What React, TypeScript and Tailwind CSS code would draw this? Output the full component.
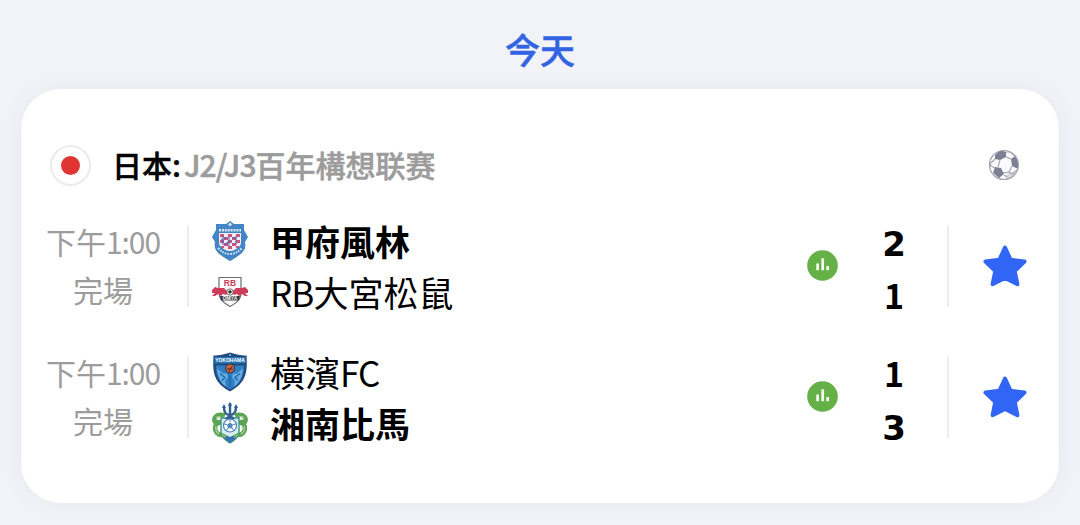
import { Fragment, type ReactNode } from "react";
import clsx from "clsx";

function KofuCrest() {
  return (
    <svg width="38" height="42" viewBox="0 0 38 42">
      <path
        d="M19 1l4 3 10 0 0 6 4 7-3 5c2 9-5 13-15 19C9 35 2 31 4 22l-3-5 4-7 0-6 10 0z"
        fill="#4385c5"
      />
      <path d="M8 13h22v9c0 6-5 9-11 13-6-4-11-7-11-13z" fill="#f3ecf5" />
      <path
        d="M9 14h4v3H9zM17 14h4v3h-4zM25 14h4v3h-4zM13 17h4v3h-4zM21 17h4v3h-4zM9 20h4v3H9zM17 20h4v3h-4zM25 20h4v3h-4zM13 23h4v3h-4zM21 23h4v3h-4zM17 26h4v3h-4zM10 26h3v2h-3zM25 26h3v2h-3z"
        fill="#c9567f"
      />
      <path
        d="M12 16v9M10 20l5-2M18 16v10M21 18h4M25 16v9M14 25l4-4"
        stroke="#5964aa"
        strokeWidth="1.1"
        fill="none"
      />
      <path d="M4 23c6 2 8 8 15 8s9-6 15-8l0 5c-4 6-9 9-15 13C13 36 8 33 4 27z" fill="#4385c5" />
      <path d="M7 28c4 4 7 6 12 6s8-2 12-6" stroke="#d9e9f6" strokeWidth="1.8" strokeDasharray="1.7 1.1" fill="none" />
      <path d="M17 4.5l2-2 2 2-2 2z" fill="#d3e5f4" />
      <path d="M8 10.3h22" stroke="#dcebf7" strokeWidth="2.6" strokeDasharray="2 .9" />
    </svg>
  );
}

function OmiyaCrest() {
  return (
    <svg width="38" height="32" viewBox="0 0 38 32">
      <path
        d="M8 1.5h22v15c0 7-4 10-11 14C12 26.5 8 23 8 16z"
        fill="#fff"
        stroke="#6b6b70"
        strokeWidth="1.2"
      />
      <path
        d="M1 14l3-3 3 1 6 0 4 4-2 3-3-1-2 2-3-2-3 2H1l3-3-3 0zM37 14l-3-3-3 1-6 0-4 4 2 3 3-1 2 2 3-2 3 2h3l-3-3 3 0z"
        fill="#cf3c5a"
      />
      <circle cx="19" cy="16" r="3.2" fill="#fff" stroke="#444" strokeWidth=".8" />
      <path d="M19 14l2 1.5-1 2h-2l-1-2z" fill="#333" />
      <path d="M9 20h20l-1 4.5H10z" fill="#3c3c42" />
      <text x="19" y="9.5" textAnchor="middle" fontSize="8.5" fontWeight="700" fontFamily="Liberation Sans, sans-serif" fill="#c93f5a">
        RB
      </text>
      <text x="19" y="23.8" textAnchor="middle" fontSize="4.5" fontWeight="700" fontFamily="Liberation Sans, sans-serif" fill="#fff">
        OMIYA
      </text>
    </svg>
  );
}

function YokohamaCrest() {
  return (
    <svg width="36" height="42" viewBox="0 0 36 41">
      <path
        d="M1.5 4c7 0 10-1 16.5-3 6.5 2 9.5 3 16.5 3 1 17 0 27-16.5 36C1.5 31 .5 21 1.5 4z"
        fill="#234a7c"
      />
      <path d="M4 14h28c0 12-4 18-14 24C8 32 4 26 4 14z" fill="#2f7fc4" />
      <path
        d="M5 17l6 5 4 0 1 4-3 3 1 6c-6-4-8-10-9-18zM31 17l-6 5-4 0-1 4 3 3-1 6c6-4 8-10 9-18z"
        fill="#65aee2"
      />
      <path d="M8 22l5 4-3 3M28 22l-5 4 3 3M18 24v12" stroke="#1e5fa4" strokeWidth="1.2" fill="none" />
      <circle cx="18" cy="17" r="5" fill="#23374f" />
      <circle cx="18" cy="17" r="4" fill="#c9623f" />
      <path d="M15 17l3 1 2-3M17 20l1-3 3 1" stroke="#572d2d" strokeWidth="1" fill="none" />
      <path d="M17 2.5h2v2h-2z" fill="#62a4d5" />
      <path d="M2.5 5.5h31v6.5h-31z" fill="#2773b7" />
      <text
        x="18"
        y="10.7"
        textAnchor="middle"
        fontSize="5"
        fontWeight="700"
        fontFamily="Liberation Sans, sans-serif"
        fill="#fff"
      >
        YOKOHAMA
      </text>
    </svg>
  );
}

function ShonanCrest() {
  return (
    <svg width="36" height="42" viewBox="0 0 36 42">
      <path
        d="M11 13C4 12 1 16 3 20c1 2 4 2 4 0M6 20c-5 5-3 12 3 13M25 13c7-1 10 3 8 7-1 2-4 2-4 0M30 20c5 5 3 12-3 13"
        fill="none"
        stroke="#5da453"
        strokeWidth="4.5"
        strokeLinecap="round"
      />
      <path
        d="M4 16c2-2 4-2 5 0M4 24c-1 4 0 6 3 8M32 16c-2-2-4-2-5 0M32 24c1 4 0 6-3 8"
        fill="none"
        stroke="#b4d8a3"
        strokeWidth="1.2"
      />
      <path d="M9 16h18v14c0 4-4 8-9 11-5-3-9-7-9-11z" fill="#d8eef0" stroke="#3c8f83" strokeWidth="1.4" />
      <path d="M10 31l8 4 8-4-3 6-5 4-5-4z" fill="#3572ae" />
      <path
        d="M18 1v17M12 5c0 6 2 8 6 8s6-2 6-8M14 17l4-3 4 3"
        fill="none"
        stroke="#2f5e90"
        strokeWidth="2.4"
      />
      <path d="M18 0l2 4h-4zM12 2l2 4h-4zM24 2l2 4h-4z" fill="#2f5e90" />
      <circle cx="18" cy="23.5" r="6.5" fill="#fff" stroke="#4e82b8" strokeWidth="1.2" />
      <path d="M18 20.5l3 2.2-1.1 3.6h-3.8L15 22.7z" fill="#4f86bb" />
      <path d="M18 17v3M12 22l3 .5M24 22l-3 .5M16 26l-2 3M20 26l2 3" stroke="#4f86bb" />
      <path d="M10 32l4 3M26 32l-4 3" stroke="#76bb64" strokeWidth="2.5" />
    </svg>
  );
}

function SoccerBall() {
  return (
    <svg width="32" height="32" viewBox="0 0 32 32">
      <defs>
        <clipPath id="ball">
          <circle cx="16" cy="16" r="14.5" />
        </clipPath>
      </defs>
      <circle cx="16" cy="16" r="14.5" fill="#fafafc" />
      <g clipPath="url(#ball)">
        <path d="M18 26l6-3 4 1-4 7-6 1z" fill="#d5d5df" />
        <path
          d="M7 6l5-5 6 2v5l-6 3-5-1zM23 10l4-3 5 6-2 7-6-3zM7 18l6 1 3 6-5 4-6-5zM0 12l2 0 1 5-3 2z"
          fill="#7f7f94"
        />
        <path
          d="M18 8l5 2M12 11l-2 7M7 10l-4 4M3 17l4 2M24 17l-3 6-6 1M18 3l4 0 5 4M21 23l3 2M16 26l3 2M24 25l5-4"
          stroke="#a3a3b3"
          strokeWidth="1.1"
          fill="none"
        />
      </g>
      <circle cx="16" cy="16" r="14.5" fill="none" stroke="#a3a3b1" strokeWidth="1.2" />
    </svg>
  );
}

function StatsBadge() {
  return (
    <svg width="31" height="31" viewBox="0 0 31 31">
      <circle cx="15.5" cy="15.5" r="15.3" fill="#65b147" />
      <path d="M10.6 13.5v6.7M15.7 8.3v11.9M20.7 16v4.2" stroke="#f6fbf4" strokeWidth="2.7" />
    </svg>
  );
}

function Star() {
  return (
    <svg width="44" height="42" viewBox="0 0 44 42">
      <path
        d="M22 2.5l5.6 12.3L41.5 16.5 31.7 26l2.7 13.2L22 33 9.6 39.2l2.7-13.2L2.5 16.5l13.9-1.7z"
        fill="#3065f6"
        stroke="#3065f6"
        strokeWidth="4"
        strokeLinejoin="round"
      />
    </svg>
  );
}

type Team = { name: string; score: number; crest: ReactNode; winner?: boolean };

const matches: { time: string[]; status: string; teams: Team[] }[] = [
  {
    time: ["下午", "1:00"],
    status: "完場",
    teams: [
      { name: "甲府風林", score: 2, crest: <KofuCrest />, winner: true },
      { name: "RB大宮松鼠", score: 1, crest: <OmiyaCrest /> },
    ],
  },
  {
    time: ["下午", "1:00"],
    status: "完場",
    teams: [
      { name: "橫濱FC", score: 1, crest: <YokohamaCrest /> },
      { name: "湘南比馬", score: 3, crest: <ShonanCrest />, winner: true },
    ],
  },
];

// Latin runs are set a little tighter than the characters around them
function TeamName({ name }: { name: string }) {
  return name.split(/([A-Z]+)/).map((part, i) => (
    <Fragment key={i}>
      {i % 2 ? <span className="tracking-[-0.9px]">{part}</span> : part}
    </Fragment>
  ));
}

function MatchRow({ time, status, teams }: (typeof matches)[number]) {
  return (
    <div className="flex h-[131px] items-center">
      <div className="flex w-[166px] flex-col pr-0.5 pb-0.5 text-center text-[30px] leading-[48px] text-[#9c9c9c]">
        <span>
          {time[0]}
          <span className="tracking-[-1.1px]">{time[1]}</span>
        </span>
        <span>{status}</span>
      </div>
      <div className="h-[82px] w-0.5 bg-[#ededed]" />

      <div className="flex flex-1 flex-col">
        {teams.map((team) => (
          <div key={team.name} className="flex h-[51px] items-center">
            <div className="flex w-[81px] justify-center pt-0.5">{team.crest}</div>
            <span
              className={clsx(
                "text-[35px] leading-[51px] whitespace-nowrap text-black",
                team.winner && "font-bold",
              )}
            >
              <TeamName name={team.name} />
            </span>
          </div>
        ))}
      </div>

      <StatsBadge />
      <div className="ml-[3px] flex w-[106px] flex-col pt-1 text-center text-[34px] leading-[53px] font-bold text-black">
        {teams.map((team) => (
          <span
            key={team.name}
            className={clsx("h-[53px]", team.score !== 1 && "pt-[3px] font-['DejaVu_Sans']")}
          >
            {team.score}
          </span>
        ))}
      </div>
      <div className="h-[82px] w-0.5 bg-[#ededed]" />

      <div className="flex w-[110px] justify-center pl-0.5">
        <Star />
      </div>
    </div>
  );
}

export default function App() {
  return (
    <div className="flex h-[525px] w-[1080px] flex-col overflow-hidden bg-[#f2f3f8] font-['Noto_Sans_CJK_TC','Noto_Sans_CJK_SC',sans-serif]">
      <h1 className="flex h-[89px] items-center justify-center pt-2.5 text-[35px] font-medium text-[#3163e2] [-webkit-text-stroke:0.5px]">
        今天
      </h1>

      <section className="mx-[21px] h-[414px] rounded-[40px] bg-white pt-[41px] shadow-[0_0_24px_rgba(0,0,0,0.05)]">
        <header className="flex h-[70px] items-center pr-[39px] pl-[29px]">
          <div className="flex size-[41px] items-center justify-center rounded-full border-2 border-[#ebebeb]">
            <div className="size-[19px] rounded-full bg-[#df3633]" />
          </div>
          <div className="ml-[21px] flex-1 pb-px text-[30px] font-medium whitespace-nowrap [-webkit-text-stroke:0.5px]">
            <span className="text-black">日本:</span>
            <span className="ml-[3px] text-[#9c9c9c]">
              <span className="tracking-[-0.9px]">J2/J3</span>百年構想联赛
            </span>
          </div>
          <SoccerBall />
        </header>

        {matches.map((match, i) => (
          <MatchRow key={i} {...match} />
        ))}
      </section>
    </div>
  );
}
